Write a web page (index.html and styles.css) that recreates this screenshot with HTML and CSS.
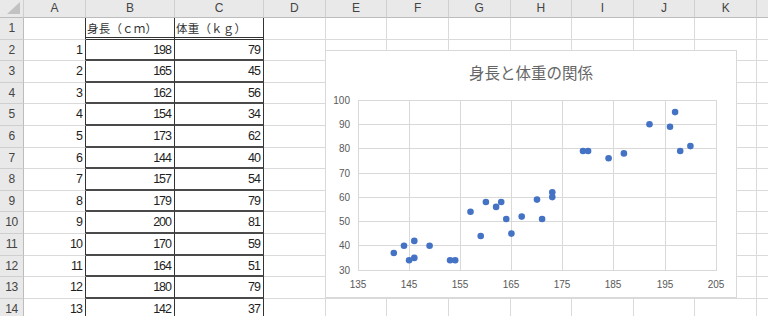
FILE: index.html
```html
<!DOCTYPE html>
<html lang="ja">
<head>
    <meta charset="UTF-8">
    <title>身長と体重の関係</title>
    <link rel="stylesheet" href="styles.css">
</head>
<body>
    <div class="sheet">
        <div class="row head">
            <div class="corner"></div><div>A</div><div>B</div><div>C</div><div>D</div><div>E</div><div>F</div><div>G</div><div>H</div><div>I</div><div>J</div><div>K</div><div></div>
        </div>
        <div class="row first">
            <div class="rh">1</div><div class="a"></div><div class="d lbl">身長（ｃｍ）</div><div class="d lbl">体重（ｋｇ）</div><div></div><div></div><div></div><div></div><div></div><div></div><div></div><div></div><div></div>
        </div>
        <div class="row"><div class="rh">2</div><div class="a">1</div><div class="d">198</div><div class="d">79</div><div></div><div></div><div></div><div></div><div></div><div></div><div></div><div></div><div></div></div>
        <div class="row"><div class="rh">3</div><div class="a">2</div><div class="d">165</div><div class="d">45</div><div></div><div></div><div></div><div></div><div></div><div></div><div></div><div></div><div></div></div>
        <div class="row"><div class="rh">4</div><div class="a">3</div><div class="d">162</div><div class="d">56</div><div></div><div></div><div></div><div></div><div></div><div></div><div></div><div></div><div></div></div>
        <div class="row"><div class="rh">5</div><div class="a">4</div><div class="d">154</div><div class="d">34</div><div></div><div></div><div></div><div></div><div></div><div></div><div></div><div></div><div></div></div>
        <div class="row"><div class="rh">6</div><div class="a">5</div><div class="d">173</div><div class="d">62</div><div></div><div></div><div></div><div></div><div></div><div></div><div></div><div></div><div></div></div>
        <div class="row"><div class="rh">7</div><div class="a">6</div><div class="d">144</div><div class="d">40</div><div></div><div></div><div></div><div></div><div></div><div></div><div></div><div></div><div></div></div>
        <div class="row"><div class="rh">8</div><div class="a">7</div><div class="d">157</div><div class="d">54</div><div></div><div></div><div></div><div></div><div></div><div></div><div></div><div></div><div></div></div>
        <div class="row"><div class="rh">9</div><div class="a">8</div><div class="d">179</div><div class="d">79</div><div></div><div></div><div></div><div></div><div></div><div></div><div></div><div></div><div></div></div>
        <div class="row"><div class="rh">10</div><div class="a">9</div><div class="d">200</div><div class="d">81</div><div></div><div></div><div></div><div></div><div></div><div></div><div></div><div></div><div></div></div>
        <div class="row"><div class="rh">11</div><div class="a">10</div><div class="d">170</div><div class="d">59</div><div></div><div></div><div></div><div></div><div></div><div></div><div></div><div></div><div></div></div>
        <div class="row"><div class="rh">12</div><div class="a">11</div><div class="d">164</div><div class="d">51</div><div></div><div></div><div></div><div></div><div></div><div></div><div></div><div></div><div></div></div>
        <div class="row"><div class="rh">13</div><div class="a">12</div><div class="d">180</div><div class="d">79</div><div></div><div></div><div></div><div></div><div></div><div></div><div></div><div></div><div></div></div>
        <div class="row"><div class="rh">14</div><div class="a">13</div><div class="d">142</div><div class="d">37</div><div></div><div></div><div></div><div></div><div></div><div></div><div></div><div></div><div></div></div>

        <!-- chart floats over the cells, like in Excel -->
        <div class="chart">
            <div class="chart-title">身長と体重の関係</div>
            <svg class="plot" width="410" height="205" viewBox="326 92 410 205">
                <g class="grid">
                    <line x1="358.5" y1="100" x2="358.5" y2="270"/>
                    <line x1="409.5" y1="100" x2="409.5" y2="270"/>
                    <line x1="460.5" y1="100" x2="460.5" y2="270"/>
                    <line x1="511.5" y1="100" x2="511.5" y2="270"/>
                    <line x1="562.5" y1="100" x2="562.5" y2="270"/>
                    <line x1="613.5" y1="100" x2="613.5" y2="270"/>
                    <line x1="665.5" y1="100" x2="665.5" y2="270"/>
                    <line x1="716.5" y1="100" x2="716.5" y2="270"/>
                    <line x1="358" y1="100.5" x2="717" y2="100.5"/>
                    <line x1="358" y1="124.5" x2="717" y2="124.5"/>
                    <line x1="358" y1="148.5" x2="717" y2="148.5"/>
                    <line x1="358" y1="173.5" x2="717" y2="173.5"/>
                    <line x1="358" y1="197.5" x2="717" y2="197.5"/>
                    <line x1="358" y1="221.5" x2="717" y2="221.5"/>
                    <line x1="358" y1="245.5" x2="717" y2="245.5"/>
                    <line x1="358" y1="270.5" x2="717" y2="270.5"/>
                </g>
                <g class="ylab">
                    <text x="350" y="104">100</text>
                    <text x="350" y="128">90</text>
                    <text x="350" y="152">80</text>
                    <text x="350" y="177">70</text>
                    <text x="350" y="201">60</text>
                    <text x="350" y="225">50</text>
                    <text x="350" y="249">40</text>
                    <text x="350" y="274">30</text>
                </g>
                <g class="xlab">
                    <text x="358" y="288">135</text>
                    <text x="409" y="288">145</text>
                    <text x="460" y="288">155</text>
                    <text x="511" y="288">165</text>
                    <text x="562" y="288">175</text>
                    <text x="613" y="288">185</text>
                    <text x="665" y="288">195</text>
                    <text x="716" y="288">205</text>
                </g>
                <g class="dots">
                    <circle cx="393.8" cy="253.0" r="3.3"/>
                    <circle cx="404.0" cy="245.7" r="3.3"/>
                    <circle cx="409.1" cy="260.3" r="3.3"/>
                    <circle cx="414.3" cy="240.9" r="3.3"/>
                    <circle cx="414.3" cy="257.9" r="3.3"/>
                    <circle cx="429.6" cy="245.7" r="3.3"/>
                    <circle cx="450.1" cy="260.3" r="3.3"/>
                    <circle cx="455.2" cy="260.3" r="3.3"/>
                    <circle cx="470.5" cy="211.7" r="3.3"/>
                    <circle cx="480.7" cy="236.0" r="3.3"/>
                    <circle cx="485.9" cy="202.0" r="3.3"/>
                    <circle cx="496.1" cy="206.9" r="3.3"/>
                    <circle cx="501.2" cy="202.0" r="3.3"/>
                    <circle cx="506.3" cy="219.0" r="3.3"/>
                    <circle cx="511.4" cy="233.6" r="3.3"/>
                    <circle cx="521.7" cy="216.6" r="3.3"/>
                    <circle cx="537.0" cy="199.6" r="3.3"/>
                    <circle cx="542.1" cy="219.0" r="3.3"/>
                    <circle cx="552.3" cy="197.1" r="3.3"/>
                    <circle cx="552.3" cy="192.3" r="3.3"/>
                    <circle cx="583.0" cy="151.0" r="3.3"/>
                    <circle cx="588.1" cy="151.0" r="3.3"/>
                    <circle cx="608.6" cy="158.3" r="3.3"/>
                    <circle cx="623.9" cy="153.4" r="3.3"/>
                    <circle cx="649.5" cy="124.3" r="3.3"/>
                    <circle cx="670.0" cy="126.7" r="3.3"/>
                    <circle cx="675.1" cy="112.1" r="3.3"/>
                    <circle cx="680.2" cy="151.0" r="3.3"/>
                    <circle cx="690.4" cy="146.1" r="3.3"/>
                </g>
            </svg>
        </div>
    </div>
</body>
</html>
```

FILE: styles.css
```css
body {
    margin: 0;
    background-color: white;
    overflow: hidden;
    font-family: 'Liberation Sans', 'Noto Sans CJK JP', sans-serif;
    color: #222;
}
.sheet {
    position: relative;
    width: 768px;
    height: 316px;
    overflow: hidden;
}
.row {
    display: grid;
    grid-template-columns: 24px 62px 89px 89px repeat(8, 61.625px) 40px;
    height: 21.6px;
}
.row > div {
    box-sizing: border-box;
    border-right: 1px solid #dadada;
    border-bottom: 1px solid #dadada;
    overflow: hidden;
    white-space: nowrap;
}
.head {
    height: 18px;
}
.head > div {
    background-color: #e9e9e9;
    border-right-color: #cfcfcf;
    border-bottom-color: #bcbcbc;
    color: #444;
    font-size: 12px;
    line-height: 17px;
    text-align: center;
}
.head > .corner {
    position: relative;
}
.corner::after {
    content: '';
    position: absolute;
    right: 3px;
    bottom: 3px;
    border-left: 13px solid transparent;
    border-bottom: 12px solid #c2c2c2;
}
.row > .rh {
    background-color: #e9e9e9;
    border-right-color: #bcbcbc;
    border-bottom-color: #cfcfcf;
    color: #444;
    font-size: 12px;
    letter-spacing: -0.5px;
    line-height: 21px;
    text-align: center;
}
.row > .a,
.row > .d {
    font-size: 12.5px;
    letter-spacing: -1px;
    line-height: 21px;
    text-align: right;
    padding-right: 3px;
    color: #1e1e1e;
}
.row > .a {
    border-right: 1px solid #333;
}
.row > .d {
    border-right: 1px solid #333;
    border-bottom: 2px solid #4a4a4a;
}
.first > .d {
    border-bottom: 3px double #333;
}
.row > .lbl {
    font-family: 'Noto Sans CJK JP', sans-serif;
    font-size: 11.5px;
    letter-spacing: 0.2px;
    text-align: left;
    padding-left: 1px;
    line-height: 20px;
    color: #333;
}

.chart {
    position: absolute;
    left: 325px;
    top: 50px;
    width: 412px;
    height: 248px;
    box-sizing: border-box;
    border: 1px solid #d9d9d9;
    background-color: white;
}
.chart-title {
    height: 41px;
    box-sizing: border-box;
    padding-top: 11px;
    line-height: 20px;
    text-align: center;
    font-family: 'Noto Sans CJK JP', sans-serif;
    font-size: 15.5px;
    color: #666;
}
.plot {
    display: block;
}
.grid line {
    stroke: #d9d9d9;
    stroke-width: 1;
}
.ylab text,
.xlab text {
    font-family: 'Liberation Sans', sans-serif;
    font-size: 10px;
    fill: #595959;
}
.ylab text {
    text-anchor: end;
}
.xlab text {
    text-anchor: middle;
}
.dots circle {
    fill: #4472c4;
}
```
